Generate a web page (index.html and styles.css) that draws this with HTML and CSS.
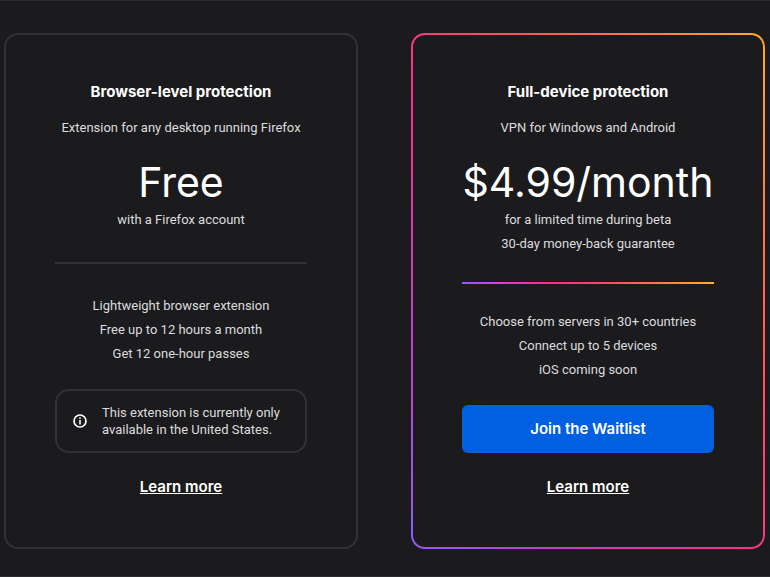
FILE: index.html
```html
<!DOCTYPE html>
<html lang="en">
<head>
  <meta charset="UTF-8" />
  <meta name="viewport" content="width=device-width, initial-scale=1.0"/>
  <title>Choose your protection</title>
  <link rel="stylesheet" href="styles.css">
</head>
<body>
  <main class="plans">
    <section class="card">
      <h2>Browser-level protection</h2>
      <p class="subtitle">Extension for any desktop running Firefox</p>
      <p class="price">Free</p>
      <p>with a Firefox account</p>
      <div class="divider"><hr></div>
      <ul class="features">
        <li>Lightweight browser extension</li>
        <li>Free up to 12 hours a month</li>
        <li>Get 12 one-hour passes</li>
      </ul>
      <div class="notice">
        <svg class="notice-icon" viewBox="0 0 14 14" aria-hidden="true">
          <circle cx="7" cy="7" r="6" fill="none" stroke="#fff" stroke-width="1.7"/>
          <circle cx="7" cy="4.1" r="0.9" fill="#fff"/>
          <path d="M7 6v4.4" stroke="#fff" stroke-width="1.6"/>
        </svg>
        <p>This extension is currently only available in the United States.</p>
      </div>
      <a class="learn-more" href="#">Learn more</a>
    </section>

    <section class="card card-featured">
      <h2>Full-device protection</h2>
      <p class="subtitle">VPN for Windows and Android</p>
      <p class="price">$4.99/month</p>
      <p>for a limited time during beta</p>
      <p>30-day money-back guarantee</p>
      <div class="divider"><hr></div>
      <ul class="features">
        <li>Choose from servers in 30+ countries</li>
        <li>Connect up to 5 devices</li>
        <li>iOS coming soon</li>
      </ul>
      <button class="waitlist" type="button">Join the Waitlist</button>
      <a class="learn-more" href="#">Learn more</a>
    </section>
  </main>
</body>
</html>
```
FILE: styles.css
```css
* {
  margin: 0;
  padding: 0;
  box-sizing: border-box;
}

body {
  font-family: Roboto, "Liberation Sans", sans-serif;
  font-size: 13px;
  line-height: 24px;
  background-color: #1b1b1d;
  color: #dcdcde;
}

.plans {
  display: grid;
  grid-template-columns: 1fr 1fr;
  gap: 53px;
  padding: 32px 5px 27px 4px;
  border-top: 1px solid #2c2c2e;
  border-bottom: 1px solid #2c2c2e;
}

.card {
  display: flex;
  flex-direction: column;
  min-height: 516px;
  padding: 45px 49px 48px;
  border: 2px solid #323234;
  border-radius: 14px;
  text-align: center;
}

.card-featured {
  border-color: transparent;
  background:
    linear-gradient(#1b1b1d, #1b1b1d) padding-box,
    linear-gradient(to top right, #9059ff, #c63fc4 22%, #f5328c 45%, #ff4f5e 65%, #ffa930) border-box;
}

h2 {
  font-family: Inter, sans-serif;
  font-size: 15px;
  font-weight: 700;
  line-height: 24px;
  color: #fff;
}

.subtitle {
  margin-top: 12px;
}

.price {
  margin-top: 18px;
  margin-bottom: 2px;
  font-family: Inter, sans-serif;
  font-size: 41px;
  line-height: 48px;
  color: #fff;
}

.divider {
  display: flex;
  flex: 1;
  align-items: center;
}

.divider hr {
  width: 100%;
  height: 2px;
  border: none;
  background-color: #323234;
}

.card-featured .divider hr {
  background: linear-gradient(to right, #9059ff, #d83fe0 14%, #ff2a8a 35%, #ff4f5e 60%, #ffb130);
}

.features {
  margin-bottom: 23px;
  list-style: none;
}

.notice {
  display: flex;
  align-items: center;
  gap: 15px;
  min-height: 64px;
  padding: 0 16px;
  border: 2px solid #323234;
  border-radius: 14px;
  line-height: 17px;
  text-align: left;
}

.notice-icon {
  flex: none;
  width: 14px;
  height: 14px;
}

.waitlist {
  height: 48px;
  padding-bottom: 2px;
  border: none;
  border-radius: 6px;
  background-color: #0060df;
  color: #fff;
  font-family: Inter, sans-serif;
  font-size: 15px;
  font-weight: 600;
  cursor: pointer;
}

.learn-more {
  align-self: center;
  margin-top: 22px;
  color: #fff;
  font-size: 15px;
  font-family: Inter, sans-serif;
  font-weight: 600;
}

@media (max-width: 640px) {
  .plans {
    grid-template-columns: 1fr;
  }
}
```
